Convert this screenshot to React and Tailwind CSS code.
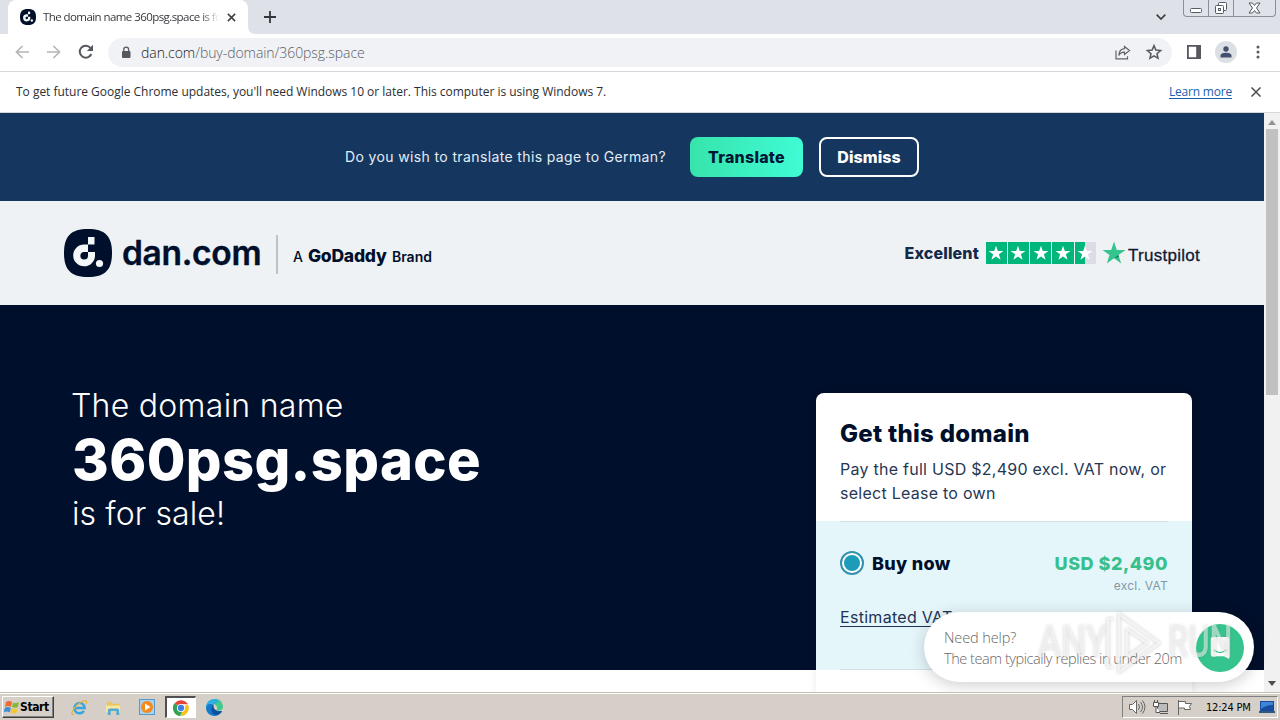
import React from "react";

function DanMark({ className }) {
  return (
    <svg viewBox="0 0 48 48" className={className}>
      <path d="M24 0C41 0 48 7 48 24S41 48 24 48 0 41 0 24 7 0 24 0Z" fill="#000f2b" />
      <path fill="#f4f7f9" fillRule="evenodd" d="M24 15.500V23H31V26.500A10.900 10.900 0 1 1 20 15.500ZM20.500 23A3.800 3.800 0 1 0 24 27V23Z" />
      <path fill="#f4f7f9" d="M24 8h6.500v7.500H24z" />
      <circle cx="35.500" cy="34.500" r="3.600" fill="#f4f7f9" />
    </svg>
  );
}

function Star({ className, fill = "#fff" }) {
  return (
    <svg viewBox="0 0 24 24" className={className}>
      <path fill={fill} d="M12 1l2.700 8h8.500l-6.900 5 2.600 8.200L12 17.200l-6.900 5L7.700 14 .8 9h8.500z" />
    </svg>
  );
}

function TabStrip() {
  return (
    <div className="flex h-[34px] shrink-0 bg-[#dee1e8]">
      <div className="ml-2 flex h-full w-[240px] items-center rounded-t-lg bg-white pl-3 pr-[10px]">
        <DanMark className="size-4 shrink-0" />
        <span className="ml-[7px] w-[176px] overflow-hidden whitespace-nowrap bg-gradient-to-r from-[#303236] from-90% to-transparent bg-clip-text text-[11.500px] tracking-[-0.570px] text-transparent">
          The domain name 360psg.space is for
        </span>
        <svg viewBox="0 0 10 10" className="ml-[8px] size-[9px] shrink-0" stroke="#3c4043" strokeWidth="1.700"><path d="M1 1l8 8M9 1L1 9" /></svg>
      </div>
      <svg viewBox="0 0 8 8" className="mt-[26px] size-2" fill="#fff"><path d="M0 0Q0 8 8 8H0z" /></svg>
      <svg viewBox="0 0 12 12" className="ml-2 mt-[11px] size-3" stroke="#33363b" strokeWidth="1.800"><path d="M6 0v12M0 6h12" /></svg>
      <svg viewBox="0 0 10 6" className="ml-auto mr-[17px] mt-[14px] h-[6px] w-[10px]" fill="none" stroke="#3c4043" strokeWidth="1.700"><path d="M.7.7L5 5l4.300-4.300" /></svg>
      <div className="mr-[4px] flex h-[17px] w-[93px] rounded-b-[4px] border border-t-0 border-[#8b8f99] bg-[#dfe2e8]">
        <div className="flex w-[25px] justify-center border-r border-[#8b8f99]"><svg viewBox="0 0 12 5" className="mt-[8px] h-[5px] w-3" fill="#fff" stroke="#555a63"><rect x=".5" y=".5" width="11" height="4" rx="1" /></svg></div>
        <div className="flex w-[25px] justify-center border-r border-[#8b8f99]"><svg viewBox="0 0 14 14" className="mt-[1px] size-[14px]" fill="#fff" stroke="#555a63"><rect x="4.500" y="1.500" width="8" height="8" rx="1" /><rect x="1.500" y="4.500" width="8" height="8" rx="1" /><rect x="4.500" y="7.500" width="2" height="2" /></svg></div>
        <div className="flex flex-1 justify-center"><svg viewBox="0 0 13 12" className="mt-[2px] h-3 w-[13px]" fill="#fff" stroke="#555a63"><path d="M1 1h3.500l2 2.500L8.500 1H12L8.500 6l3.500 5H8.500l-2-2.500L4.500 11H1l3.500-5z" /></svg></div>
      </div>
    </div>
  );
}

function Toolbar() {
  return (
    <div className="flex h-[38px] shrink-0 items-center border-b border-[#d5d7da] bg-white pb-px pl-[15px] pr-[20px]">
      <svg viewBox="0 0 14 14" className="size-[14px]" fill="none" stroke="#b4b6b9" strokeWidth="1.700"><path d="M14 7H1.500M7.500 1l-6 6 6 6" /></svg>
      <svg viewBox="0 0 14 14" className="ml-[18px] size-[14px]" fill="none" stroke="#b4b6b9" strokeWidth="1.700"><path d="M0 7h12.500M6.500 1l6 6-6 6" /></svg>
      <svg viewBox="0 0 16 16" className="ml-[17px] size-4" fill="none" stroke="#55585c" strokeWidth="2"><path d="M13.300 10A6 6 0 1 1 12.500 4" /><path fill="#55585c" stroke="none" d="M15 .8V7H8.800z" /></svg>
      <div className="ml-[14px] flex h-[29px] w-[1064px] items-center rounded-full bg-[#f0f2f5] pl-[13px] pr-[9px]">
        <svg viewBox="0 0 10 13" className="h-[13px] w-[10px]"><rect x="1" y="5" width="8.500" height="7" rx="1" fill="#55585c" /><path d="M2.800 5.500V3.500a2.400 2.400 0 0 1 4.800 0v2" fill="none" stroke="#55585c" strokeWidth="1.300" /></svg>
        <span className="ml-[10px] text-[14px] font-light tracking-[-0.060px] text-[#5c6065]"><span className="text-[#202124]">dan.com</span>/buy-domain/360psg.space</span>
        <svg viewBox="0 0 16 15" className="ml-auto h-[15px] w-4" fill="none" stroke="#5f6368" strokeWidth="1.200"><path d="M1 5.500v8.300h11.500v-2.500" /><path d="M9.500 1.500l5 4-5 4V7.200C7 7 5 8.200 3.800 10.500 4 6.500 6 4 9.500 3.700z" /></svg>
        <svg viewBox="0 0 24 24" className="ml-[14px] size-[18px]" fill="none" stroke="#55585c" strokeWidth="2"><path d="M12 3.500l2.500 5.900 6.300.6-4.800 4.200 1.400 6.200L12 17.100l-5.400 3.300L8 14.200 3.200 10l6.300-.6z" /></svg>
      </div>
      <svg viewBox="0 0 14 14" className="ml-[15px] size-[14px]"><path fill="#55585c" fillRule="evenodd" d="M0 0h14v14H0zM1.800 1.800v10.400h7.400V1.800z" /></svg>
      <div className="ml-[14px] flex size-[22px] items-center justify-center rounded-full bg-[#dcdfe4]"><svg viewBox="0 0 12 12" className="size-3" fill="#44506e"><circle cx="6" cy="3" r="2.700" /><path d="M.5 11.500V9.500C.5 7.500 4 6.800 6 6.800s5.500.7 5.500 2.700v2z" /></svg></div>
      <svg viewBox="0 0 4 14" className="ml-auto h-[14px] w-1" fill="#55585c"><circle cx="2" cy="2" r="1.500" /><circle cx="2" cy="7" r="1.500" /><circle cx="2" cy="12" r="1.500" /></svg>
    </div>
  );
}

function InfoBar() {
  return (
    <div className="flex h-[41px] shrink-0 items-center border-b border-[#d5d7da] bg-white pb-px pl-4 pr-[19px] text-[12px] text-[#2c2e31]">
      <span className="tracking-[-0.020px]">To get future Google Chrome updates, you'll need Windows 10 or later. This computer is using Windows 7.</span>
      <span className="ml-auto tracking-[-0.200px] text-[#1b62ae] underline underline-offset-2">Learn more</span>
      <svg viewBox="0 0 10 10" className="ml-[19px] size-[10px]" stroke="#4a4c50" strokeWidth="1.500"><path d="M.5.5l9 9M9.500.5l-9 9" /></svg>
    </div>
  );
}

function Trustpilot() {
  return (
    <div className="flex items-center text-[#0b1b38]">
      <span className="w-[75px] whitespace-nowrap font-['Inter'] text-[16px] font-extrabold tracking-[0.150px] text-[#14294a]">Excellent</span>
      <div className="ml-[6px] flex gap-[1px]">
        {[0, 1, 2, 3].map((i) => (
          <div key={i} className="flex size-[21.300px] items-center justify-center bg-[#00b67a]"><Star className="size-[16px]" /></div>
        ))}
        <div className="flex size-[21.300px] items-center justify-center bg-linear-to-r from-[#00b67a] from-50% to-[#dcdce6] to-50%"><Star className="size-[16px]" /></div>
      </div>
      <svg viewBox="0 0 24 24" className="ml-[6px] size-6"><path fill="#35c48d" d="M12 .5l2.800 8.400h8.700l-7 5.200 2.700 8.400-7.200-5.200-7.200 5.200 2.700-8.400-7-5.200h8.700z" /><path fill="#167b60" d="M12 17.300l5-1.300-.6-2z" /></svg>
      <span className="ml-[2px] mt-[5px] w-[72px] whitespace-nowrap font-['Liberation_Sans'] text-[17px] tracking-[0.280px] [-webkit-text-stroke:0.300px_#1b1b2e]">Trustpilot</span>
    </div>
  );
}

function Card() {
  return (
    <div className="relative h-[310px] w-[376px] shrink-0 rounded-t-lg bg-white font-['Inter'] shadow-[0_0_8px_rgba(0,0,0,0.080)]">
      <div className="h-32 px-6 pt-[25px]">
        <h2 className="text-[24px] font-extrabold leading-8 tracking-[0.270px] text-[#000f2b]">Get this domain</h2>
        <p className="mt-[7px] whitespace-nowrap text-[16px] leading-6 tracking-[0.260px] text-[#263754]">Pay the full USD $2,490 excl. VAT now, or<br />select Lease to own</p>
      </div>
      <div className="h-[149px] bg-[#e5f6fb] px-6">
        <div className="flex h-full flex-col border-y border-[#cfdfe5]">
          <div className="mt-[29px] flex h-6 items-center">
            <div className="flex size-6 items-center justify-center rounded-full border-2 border-[#3291ad] bg-white"><div className="size-4 rounded-full bg-[#1c9cb8]" /></div>
            <span className="ml-2 text-[18px] font-extrabold tracking-[0.300px] text-[#000f2b]">Buy now</span>
            <span className="ml-auto text-[18px] font-extrabold tracking-[0.500px] text-[#37bf8d]">USD $2,490</span>
          </div>
          <div className="mt-[3px] text-right text-[12px] leading-4 tracking-[0.250px] text-[#8497a4]">excl. VAT</div>
          <a className="mt-[11px] text-[16px] leading-6 tracking-[0.300px] text-[#1c3355] underline underline-offset-[3px]">Estimated VAT amount</a>
        </div>
      </div>
    </div>
  );
}

function Watermark() {
  return (
    <div className="absolute left-[114px] top-0 flex h-[70px] items-center font-['Roboto'] text-[45px] font-medium text-white/50 drop-shadow-[0_0_1.500px_rgba(110,110,110,0.550)]">
      <span className="-mt-[10px] inline-block w-[68px] origin-left scale-x-[0.780]">ANY</span>
      <svg viewBox="0 0 56 64" className="-mt-[8px] h-[64px] w-[56px]" fill="none" strokeLinejoin="round" stroke="#fff" strokeOpacity=".65">
        <path d="M7 8H2v48h5" strokeWidth="3" />
        <path d="M13 3l40 29-40 29zM21 18v28l20-14z" strokeWidth="3" />
      </svg>
      <span className="-mt-[10px] ml-[6px] inline-block w-[66px] origin-left scale-x-[0.720]">RUN</span>
    </div>
  );
}

function Chat() {
  return (
    <div className="absolute left-[924px] top-[499px] flex h-[70px] w-[330px] items-center rounded-full bg-white pl-5 pt-[1px] shadow-[0_3px_16px_rgba(0,0,0,0.200)]">
      <div className="whitespace-nowrap text-[14.500px] font-light leading-[21px] text-[#686868]">
        <div className="tracking-[-0.100px]">Need help?</div>
        <div className="tracking-[-0.450px]">The team typically replies in under 20m</div>
      </div>
      <div className="absolute left-[272px] top-3 flex size-12 items-center justify-center rounded-full bg-[#35c48d]">
        <svg viewBox="0 0 22 26" className="size-6"><path fill="#fff" d="M3 1h16q2 0 2 2v22l-6-3H3q-2 0-2-2V3q0-2 2-2z" /><path fill="none" stroke="#35c48d" strokeWidth="1.500" d="M4 15q7 6 14 0" /></svg>
      </div>
      <Watermark />
    </div>
  );
}

function Scrollbar() {
  return (
    <div className="flex w-4 shrink-0 flex-col items-center bg-[#f1f1f1]">
      <svg viewBox="0 0 8 5" className="mt-[7px] h-[5px] w-2" fill="#929292"><path d="M0 5l4-5 4 5z" /></svg>
      <div className="mt-[4px] h-[266px] w-[12px] bg-[#c1c1c1]" />
      <svg viewBox="0 0 8 5" className="mb-[6px] mt-auto h-[5px] w-2" fill="#4d4d4d"><path d="M0 0l4 5 4-5z" /></svg>
    </div>
  );
}

function Page() {
  return (
    <div className="relative flex h-[579px] shrink-0 overflow-hidden">
      <div className="w-[1264px] bg-white font-['Inter']">
        <div className="flex h-[88px] items-center justify-center bg-[#15375f]">
          <span className="-mt-px w-[321px] whitespace-nowrap text-[14px] tracking-[0.370px] text-[#e4edf5]">Do you wish to translate this page to German?</span>
          <div className="ml-6 flex h-10 w-[113px] items-center justify-center rounded-lg bg-linear-to-r from-[#37e4ab] to-[#40fbd5] text-[16px] font-extrabold tracking-[0.250px] text-[#001633]">Translate</div>
          <div className="ml-4 flex h-10 w-[100px] items-center justify-center rounded-lg border-2 border-white text-[16px] font-extrabold tracking-[0.050px] text-white">Dismiss</div>
        </div>
        <div className="flex h-[104px] items-center bg-[#eff2f4] pl-16 pr-[64px]">
          <DanMark className="size-12" />
          <span className="ml-[10px] w-[140px] whitespace-nowrap text-[33.500px] font-semibold tracking-[-0.300px] text-[#000f2b] [-webkit-text-stroke:0.400px_#000f2b]">dan.com</span>
          <div className="ml-[14px] mt-[2px] h-[39px] w-[2px] bg-[#bcc2c8]" />
          <div className="ml-[15px] mt-[6px] flex items-baseline text-[#000f2b]">
            <span className="text-[14px] font-medium">A</span>
            <span className="ml-[5px] w-[79px] whitespace-nowrap text-[17.500px] font-extrabold tracking-[-0.250px]">GoDaddy</span>
            <span className="ml-[5px] text-[14px] font-semibold">Brand</span>
          </div>
          <div className="ml-auto"><Trustpilot /></div>
        </div>
        <div className="flex h-[365px] items-start justify-between bg-[#000f2b] pl-[72px] pr-[72px] pt-[88px]">
          <div className="whitespace-nowrap text-white">
            <div className="-ml-px -mt-[7px] text-[32px] font-light leading-10 tracking-[0.270px]">The domain name</div>
            <div className="text-[56px] font-extrabold leading-[68px] tracking-[0.400px]">360psg.space</div>
            <div className="text-[32px] font-light leading-10 tracking-[0.100px]">is for sale!</div>
          </div>
          <Card />
        </div>
      </div>
      <Scrollbar />
      <Chat />
    </div>
  );
}

function Taskbar() {
  return (
    <div className="flex h-7 shrink-0 items-center border-t border-[#c4beb5] bg-[#d5cfc7] pl-[2px] pr-[2px] pt-[1px] shadow-[inset_0_1px_0_#fff]">
      <div className="flex h-[22px] w-[52px] items-center border border-b-[#404040] border-l-white border-r-[#404040] border-t-white pl-[1px] text-[12px] font-bold tracking-[-0.400px] text-black shadow-[inset_-1px_-1px_0_#808080]">
        <svg viewBox="0 0 16 16" className="size-[16px] shrink-0"><path fill="#ed6a32" d="M2 3q3-2 6 0L7 8q-3-2-6 0z" /><path fill="#82b83b" d="M9 3.500q3 1.500 6-.5l-1.200 5q-3 1.500-5.800 0z" /><path fill="#3d8ed2" d="M.8 9q3-2 6 0l-1 4.500q-3-2-6 0z" /><path fill="#f6c62e" d="M7.700 9.300q3 1.500 6 0l-1.200 4.500q-3 1.500-5.800-.3z" /></svg>
        <span className="font-['DejaVu_Sans_Condensed','DejaVu_Sans']">Start</span>
      </div>
      <svg viewBox="0 0 18 18" className="ml-[17px] size-[17px]" fill="none"><path d="M4 9.500h10.500A5.500 5.500 0 1 0 13.700 12.500" stroke="#36a6e0" strokeWidth="2.500" /><path d="M3 16C-1 18 1 11 7 6s11-6 9-1" stroke="#e8b53a" strokeWidth="1.300" /></svg>
      <svg viewBox="0 0 18 18" className="ml-[17px] size-[17px]"><path fill="#e9c75f" d="M2 3h5l1 2h8v9H2z" /><path fill="#f8e7a0" d="M1 7h15v7H1z" /><path fill="#54a9d7" d="M3 17v-5q0-2 2-2h8q2 0 2 2v5h-3v-4H6v4z" /></svg>
      <div className="ml-[17px] flex size-[16px] items-center justify-center border border-[#5599cf] bg-[#a9d2ef]"><svg viewBox="0 0 12 12" className="size-3"><circle cx="6" cy="6" r="6" fill="#f5891d" /><path fill="#fff" d="M4 2.500L9.500 6 4 9.500z" /></svg></div>
      <div className="ml-[10px] flex h-[22px] w-[31px] items-center justify-center border-l-2 border-t-2 border-b border-r border-b-white border-l-[#505050] border-r-white border-t-[#505050] bg-white">
        <svg viewBox="0 0 24 24" className="size-[16px]"><path fill="#e54335" d="M12 12L2.500 5A12 12 0 0 1 22.400 6.500H12z" /><path fill="#fbc116" d="M12 12L22.400 6.500A12 12 0 0 1 12 24z" /><path fill="#34a353" d="M12 12v1l1 5-2 6A12 12 0 0 1 2.200 5z" /><circle cx="12" cy="12" r="6" fill="#fff" /><circle cx="12" cy="12" r="4.700" fill="#3c7de6" /></svg>
      </div>
      <svg viewBox="0 0 24 24" className="ml-[10px] size-[17px]"><path fill="#1479c8" d="M0 12C0 5 6 6 11 8c-4 3-1 10 11 9-3 5-7 7-10 7C5 24 0 19 0 12z" /><path fill="#42c98b" d="M8 1C17-3 24 4 24 11c0 6-8 7-9 4 2-3 0-7-5-8z" /><path fill="#2cb0e2" d="M0 12C0 4 6 0 12 0c3 0 5 1 6 3-3 3-5 4-8 4C5 6 1 8 0 12z" /><path fill="#0d519c" d="M11 8c-5 1-5 15 5 15 3-1 6-4 7-6-8 2-14-4-12-9z" /></svg>
      <div className="ml-auto flex h-[22px] w-[156px] items-center border border-b-white border-l-[#808080] border-r-white border-t-[#808080] pl-[5px]">
        <svg viewBox="0 0 18 16" className="h-4 w-[18px]" fill="#fff" stroke="#666"><path d="M1.500 5.500h3l4-4v13l-4-4h-3z" /><path fill="none" d="M10.500 5q2 3 0 6M12.500 3q4 5 0 10M14.500 1.500q5 6.500 0 13" /></svg>
        <svg viewBox="0 0 18 16" className="ml-[6px] h-4 w-[18px]" stroke="#555" fill="#fff"><path fill="#bbb" d="M5.500 4.500h10v8h-10z" /><path d="M8 14.500h8M2.500 1v3M5.500 1v3M1.500 3.500h5v4h-5zM4 7.500v6h4" /></svg>
        <svg viewBox="0 0 16 16" className="ml-[7px] size-4" stroke="#666" fill="#fff"><path d="M1.500 1v15M1.500 2.500h7v2h6l-2 3 1 3h-6v-1.500h-6z" /></svg>
        <span className="ml-[13px] mt-[2px] whitespace-nowrap font-['DejaVu_Sans_Condensed','DejaVu_Sans'] text-[11px] tracking-[-0.200px] text-black">12:24 PM</span>
        <svg viewBox="0 0 16 14" className="ml-auto mr-[2px] h-[14px] w-4"><path fill="#174b9f" d="M1 1h14v10H1z" /><path fill="#3f83d4" d="M2 2h12v3Q7 5 2 9z" /><path fill="#315881" d="M0 11h16v2H0z" /></svg>
      </div>
    </div>
  );
}

export default function App() {
  return (
    <main className="flex h-[720px] w-[1280px] flex-col overflow-hidden bg-white font-['Open_Sans','Noto_Sans',sans-serif]">
      <TabStrip />
      <Toolbar />
      <InfoBar />
      <Page />
      <Taskbar />
    </main>
  );
}
